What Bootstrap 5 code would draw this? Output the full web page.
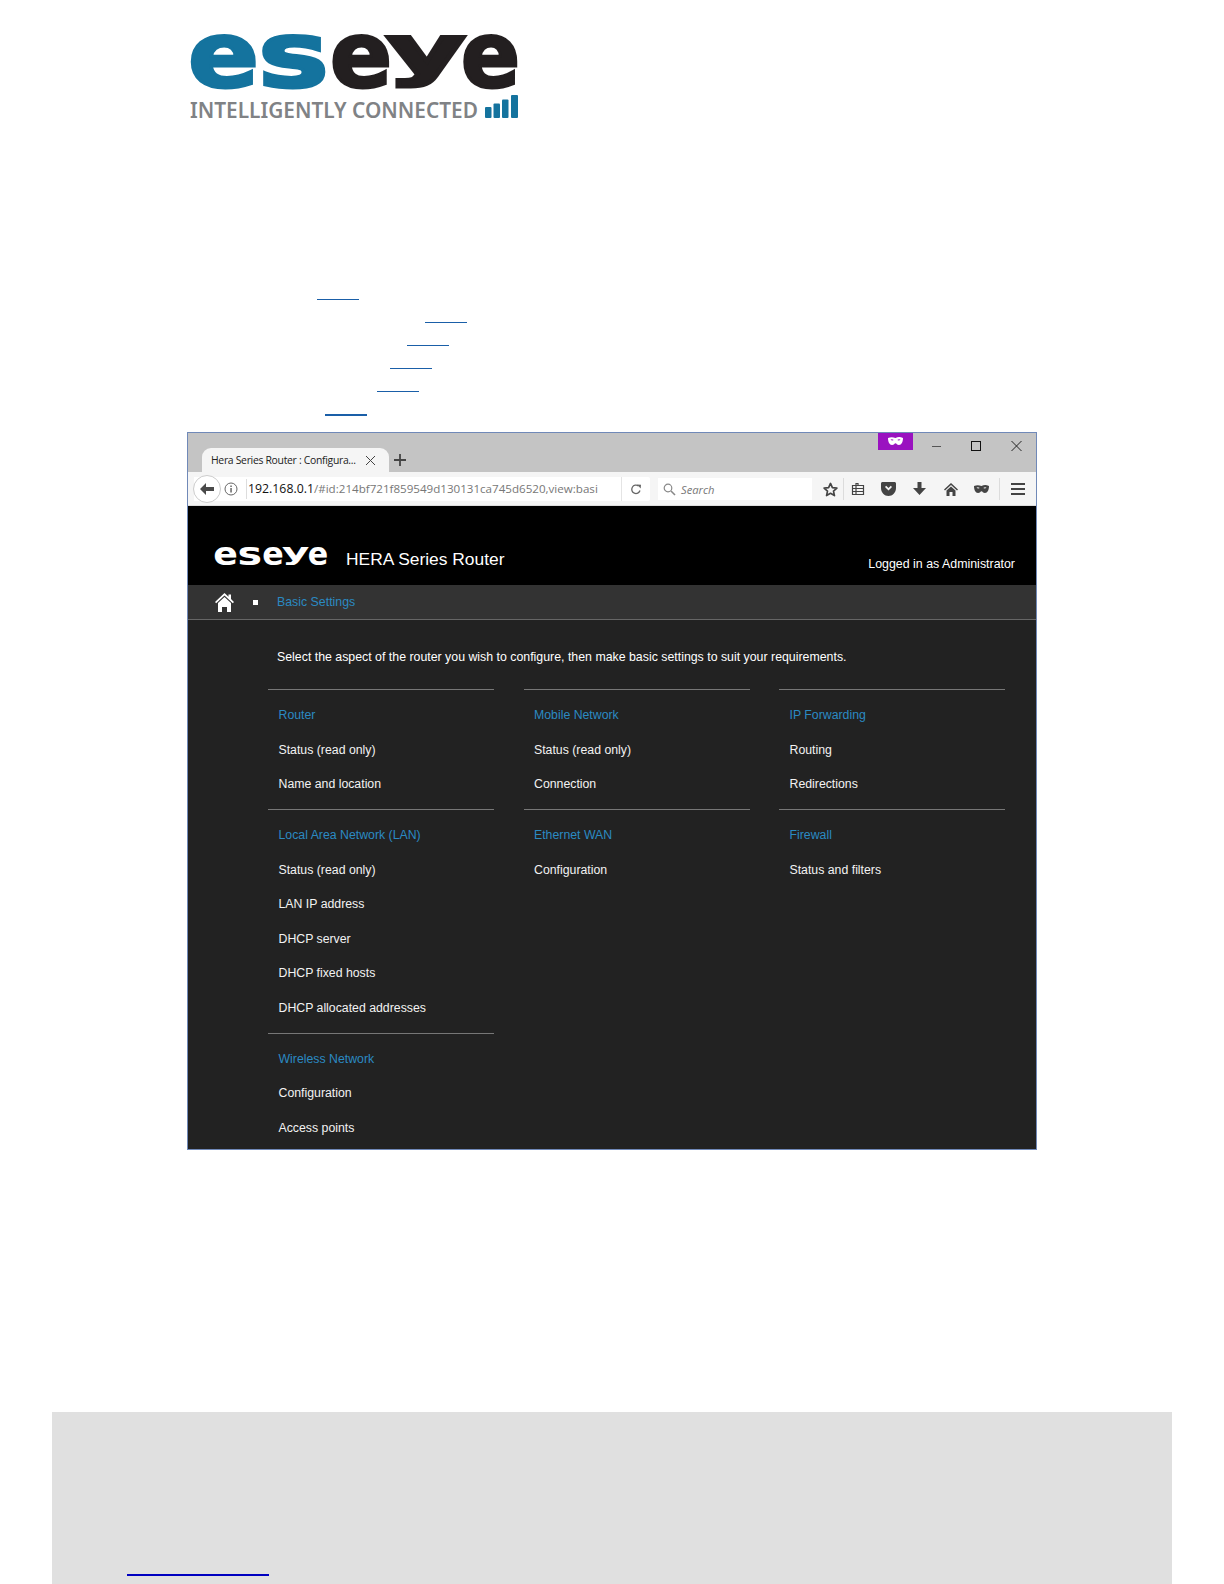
<!DOCTYPE html>
<html lang="en">
<head>
<meta charset="utf-8">
<title>Eseye HERA Series Router</title>
<link href="https://cdn.jsdelivr.net/npm/bootstrap@5.3.0/dist/css/bootstrap.min.css" rel="stylesheet">
<style>
html,body{height:1584px;overflow:hidden;background:#fff}
body{font-family:"Liberation Sans",Arial,sans-serif;position:relative}
.logo-wrap{height:132px;padding:20px 0 0 170px}
.logo-wrap svg{display:block}
.word{font-family:"DejaVu Sans",sans-serif;font-weight:700}
.tag{font-family:"Noto Sans",sans-serif;font-weight:600}
.toc{padding-top:167px;height:300px}
.toc-row{height:23px;position:relative}
.toc-rule{display:block;width:42px;height:1px;background:#1a5fa8}
.toc-row.r1{padding-left:317px}.toc-row.r2{padding-left:425px}.toc-row.r3{padding-left:407px}
.toc-row.r4{padding-left:390px}.toc-row.r5{padding-left:377px}.toc-row.r6{padding-left:325px}
.toc-row.r6 .toc-rule{height:2px}
.shot{margin-left:187px;width:850px;height:718px;border:1px solid #7089b8;overflow:hidden;background:#222;font-size:12.35px}
.tabbar{height:39px;background:#c4c4c4;position:relative}
.tab{width:187px;height:24px;margin:15px 0 0 14px;background:#f5f5f5;border-radius:9px 9px 0 0;font:10.4px "Open Sans",sans-serif;letter-spacing:-.3px;color:#222;padding-left:9px;gap:4px}
.tab-title{width:150px;white-space:nowrap}
.plus{margin:15px 0 0 0;width:22px;height:24px}
.priv{width:35px;height:17px;background:#9a12c0;margin-right:3px}
.winbtn{width:40px;height:24px}
.toolbar{height:34px;background:#f5f5f5;border-bottom:1px solid #ddd;padding-left:6px;padding-top:1px}
.urlbox{width:456px;height:24px;background:#fff;position:relative;padding-left:42px;white-space:nowrap;border-radius:0 2px 2px 0;font-family:"Open Sans",sans-serif}
.backbtn{position:absolute;left:-1px;top:-2px;width:28px;height:28px;border-radius:50%;background:#fff;border:1px solid #ccc}
.info{position:absolute;left:30px;top:5px}
.sep{position:absolute;left:52px;top:2px;width:1px;height:20px;background:#ddd}
.urlhost{color:#111;font-size:12.3px}
.urlrest{color:#777;font-size:11.6px}
.urlpath{margin-left:12px;width:365px;overflow:hidden}
.reload{position:absolute;right:0;top:0;width:29px;height:24px;border-left:1px solid #e4e4e4}
.searchbox{width:154px;height:22px;background:#fff;margin-left:8px;font:italic 11.2px "Open Sans",sans-serif;color:#777;padding-left:5px;gap:5px}
.tbicons{margin-left:5px}
.ti{width:31px;height:24px}
.ti.nar{width:26px}
.ti.clip{width:27px;margin-right:2px}
.tdiv{width:1px;height:22px;background:#dcdcdc}
.tdiv.wid{margin:0 2px}
.app-head{height:79px;background:#000;color:#fff;padding:0 21px 0 26px}
.app-title{font-size:17.4px;margin-left:16px;padding-top:40px}
.app-user{font-size:12.4px;padding-top:49px}
.app-nav{height:35px;background:#333;border-bottom:1px solid #666;color:#2b8ac2;padding-left:27px}
.crumb-dot{width:5px;height:5px;background:#fff;margin:0 19px}
.app-body{padding:0 31px 0 80px;color:#fff}
.intro{height:69px;padding:29px 0 0 9px;line-height:16px;white-space:nowrap}
.colgrid{display:grid;grid-template-columns:repeat(3,226px);column-gap:29.5px}
.sect{border-top:1px solid #777;padding:8px 0 7.7px 10.5px;font-size:12.3px}
.sect div{height:34.5px;line-height:34.5px;white-space:nowrap;color:#f2f2f2}
.sect div.sect-h{color:#2b8ac2}
.foot{position:absolute;left:52px;top:1412px;width:1120px;height:172px;background:#e0e0e0;padding:162px 0 0 75px}
.foot-rule{display:block;width:142px;height:2px;background:#0000c0}
</style>
</head>
<body>
<div class="logo-wrap">
<svg width="360" height="105" viewBox="170 20 360 105">
<g class="word" stroke-width="3" font-size="91">
<text x="188" y="87" fill="#14739e" stroke="#14739e" textLength="71" lengthAdjust="spacingAndGlyphs">e</text>
<text x="258" y="87" fill="#14739e" stroke="#14739e" textLength="71" lengthAdjust="spacingAndGlyphs">s</text>
<text x="330" y="87" fill="#231f20" stroke="#231f20" textLength="62" lengthAdjust="spacingAndGlyphs">e</text>
<text x="386" y="73" font-size="65" fill="#231f20" stroke="#231f20" textLength="80" lengthAdjust="spacingAndGlyphs">y</text>
<text x="461" y="87" fill="#231f20" stroke="#231f20" textLength="59" lengthAdjust="spacingAndGlyphs">e</text>
</g>
<text class="tag" x="190" y="118" font-size="21.5" fill="#808285" textLength="288" lengthAdjust="spacingAndGlyphs">INTELLIGENTLY CONNECTED</text>
<g fill="#14739e"><rect x="485" y="107" width="6.5" height="11" rx="1"/><rect x="493.500" y="103.500" width="6.500" height="14.500" rx="1"/><rect x="502" y="99.500" width="6.500" height="18.500" rx="1"/><rect x="511" y="95" width="7" height="23" rx="1"/></g>
</svg>
</div>
<div class="toc">
<div class="toc-row r1"><span class="toc-rule"></span></div>
<div class="toc-row r2"><span class="toc-rule"></span></div>
<div class="toc-row r3"><span class="toc-rule"></span></div>
<div class="toc-row r4"><span class="toc-rule"></span></div>
<div class="toc-row r5"><span class="toc-rule"></span></div>
<div class="toc-row r6"><span class="toc-rule"></span></div>
</div>
<div class="shot">
 <div class="tabbar d-flex align-items-start">
  <div class="tab d-flex align-items-center">
   <span class="tab-title">Hera Series Router : Configura...</span>
   <svg width="11" height="11" viewBox="0 0 11 11"><path d="M1 1l9 9M10 1l-9 9" stroke="#444" stroke-width="1" fill="none"/></svg>
  </div>
  <div class="plus d-flex align-items-center justify-content-center">
   <svg width="12" height="12" viewBox="0 0 12 12"><path d="M6 0v12M0 6h12" stroke="#444" stroke-width="1.8"/></svg>
  </div>
  <div class="ms-auto d-flex align-items-start">
   <div class="priv d-flex align-items-center justify-content-center">
    <svg width="15" height="9" viewBox="0 0 15 9"><path fill="#fff" fill-rule="evenodd" d="M0 1c3-1.300 5-1 7.500 0C10-.1 12-.3 15 1c0 4-1.500 7-4 7-2 0-2.500-1.800-3.500-1.800S6 8 4 8C1.500 8 0 5 0 1zm2.500 1.800c1 1 2.500 1 3.200.3-1-1-2.300-1.200-3.200-.3zm6.800.3c.7.7 2.200.7 3.200-.3-.9-.9-2.200-.7-3.200.3z"/></svg>
   </div>
   <div class="winbtn d-flex align-items-center justify-content-center"><svg width="11" height="11" viewBox="0 0 11 11"><path d="M1 6.500h9" stroke="#555" stroke-width="1"/></svg></div>
   <div class="winbtn d-flex align-items-center justify-content-center"><svg width="11" height="11" viewBox="0 0 11 11"><rect x=".5" y="1.500" width="9" height="9" fill="none" stroke="#111" stroke-width="1"/></svg></div>
   <div class="winbtn d-flex align-items-center justify-content-center"><svg width="11" height="11" viewBox="0 0 11 11"><path d="M.5 1l10 10M10.500 1l-10 10" stroke="#222" stroke-width="1"/></svg></div>
  </div>
 </div>
 <div class="toolbar d-flex align-items-center">
  <div class="urlbox d-flex align-items-center">
   <div class="backbtn d-flex align-items-center justify-content-center">
    <svg width="14" height="12" viewBox="0 0 14 12"><path d="M6 0L0 6l6 6V8h8V4H6z" fill="#4a4a4a"/></svg>
   </div>
   <svg class="info" width="14" height="14" viewBox="0 0 14 14"><circle cx="7" cy="7" r="6" fill="none" stroke="#666" stroke-width="1"/><rect x="6.300" y="6" width="1.500" height="4.500" fill="#666"/><rect x="6.300" y="3.500" width="1.500" height="1.500" fill="#666"/></svg>
   <span class="sep"></span>
   <div class="urlpath"><span class="urlhost">192.168.0.1</span><span class="urlrest">/#id:214bf721f859549d130131ca745d6520,view:basi</span></div>
   <div class="reload d-flex align-items-center justify-content-center">
    <svg width="12" height="12" viewBox="0 0 12 12"><path d="M10 7.500A4.200 4.200 0 1 1 8.500 3" fill="none" stroke="#666" stroke-width="1.300"/><path d="M7 1.500l4 .2-.3 3.800z" fill="#666"/></svg>
   </div>
  </div>
  <div class="searchbox d-flex align-items-center">
   <svg width="13" height="13" viewBox="0 0 13 13"><circle cx="5" cy="5" r="3.800" fill="none" stroke="#888" stroke-width="1.200"/><path d="M8 8l4 4" stroke="#888" stroke-width="1.600"/></svg>
   <span>Search</span>
  </div>
  <div class="tbicons d-flex align-items-center">
   <div class="ti nar d-flex align-items-center justify-content-center">
    <svg width="15" height="15" viewBox="0 0 16 16"><path d="M8 1.500l2 4.500 4.800.5-3.600 3.200 1 4.800L8 12.100l-4.200 2.400 1-4.800L1.200 6.500 6 6z" fill="none" stroke="#444" stroke-width="1.800" stroke-linejoin="round"/></svg>
   </div>
   <span class="tdiv"></span>
   <div class="ti clip d-flex align-items-center justify-content-center">
    <svg width="14" height="14" viewBox="0 0 14 14"><path d="M1.500 3.500h11v9h-11zM5 3.500V1.500h2v2M1.500 6.500h11M1.500 9.500h11M5 3.500v9" fill="none" stroke="#444" stroke-width="1.200"/></svg>
   </div>
   <div class="ti d-flex align-items-center justify-content-center">
    <svg width="15" height="14" viewBox="0 0 15 14"><path fill="#444" fill-rule="evenodd" d="M1.500 0h12c.8 0 1.500.7 1.500 1.500V6c0 4.500-3.500 8-7.500 8S0 10.500 0 6V1.500C0 .7.700 0 1.500 0zM4 5l3.500 3.500L11 5l-1.200-1.200-2.300 2.300-2.300-2.300z"/></svg>
   </div>
   <div class="ti d-flex align-items-center justify-content-center">
    <svg width="13" height="14" viewBox="0 0 13 14"><path d="M4.500 0h4v6H13l-6.500 7L0 6h4.500z" fill="#444"/></svg>
   </div>
   <div class="ti d-flex align-items-center justify-content-center">
    <svg width="14" height="13" viewBox="0 0 14 13"><path d="M7 0l7 6.500-1 1L7 2 1 7.500l-1-1zM2.500 7.500L7 3.500l4.500 4V13H8.500V9h-3v4h-3z" fill="#444"/></svg>
   </div>
   <div class="ti d-flex align-items-center justify-content-center">
    <svg width="15" height="9" viewBox="0 0 15 9"><path fill="#444" fill-rule="evenodd" d="M0 1c3-1.300 5-1 7.500 0C10-.1 12-.3 15 1c0 4-1.500 7-4 7-2 0-2.500-1.800-3.500-1.800S6 8 4 8C1.500 8 0 5 0 1zm2.500 1.800c1 1 2.500 1 3.200.3-1-1-2.300-1.200-3.200-.3zm6.800.3c.7.7 2.200.7 3.200-.3-.9-.9-2.200-.7-3.200.3z"/></svg>
   </div>
   <span class="tdiv wid"></span>
   <div class="ti d-flex align-items-center justify-content-center">
    <svg width="14" height="12" viewBox="0 0 14 12"><path d="M0 1h14M0 6h14M0 11h14" stroke="#444" stroke-width="2.200"/></svg>
   </div>
  </div>
 </div>
 <div class="app-head d-flex justify-content-between align-items-start">
  <div class="d-flex align-items-start">
   <svg width="116" height="62" viewBox="0 0 116 62">
    <g class="word" fill="#fff" transform="translate(-66 29) scale(.3465)" font-size="91">
     <text x="188" y="87" textLength="71" lengthAdjust="spacingAndGlyphs">e</text>
     <text x="258" y="87" textLength="71" lengthAdjust="spacingAndGlyphs">s</text>
     <text x="330" y="87" textLength="62" lengthAdjust="spacingAndGlyphs">e</text>
     <text x="386" y="73" font-size="65" textLength="80" lengthAdjust="spacingAndGlyphs">y</text>
     <text x="461" y="87" textLength="59" lengthAdjust="spacingAndGlyphs">e</text>
    </g>
   </svg>
   <div class="app-title">HERA Series Router</div>
  </div>
  <div class="app-user">Logged in as Administrator</div>
 </div>
 <div class="app-nav d-flex align-items-center">
  <svg width="19" height="20" viewBox="0 0 19 20"><path d="M9.500 1l4 3.700V2.500H16V7l3 3-1.200 1.300L9.500 3.500 1.200 11.300 0 10zM3 11l6.500-6 6.500 6v9h-4v-5H7v5H3z" fill="#fff"/></svg>
  <span class="crumb-dot"></span>
  <span>Basic Settings</span>
 </div>
 <div class="app-body">
  <div class="intro">Select the aspect of the router you wish to configure, then make basic settings to suit your requirements.</div>
  <div class="colgrid">
   <div>
    <div class="sect"><div class="sect-h">Router</div><div>Status (read only)</div><div>Name and location</div></div>
    <div class="sect"><div class="sect-h">Local Area Network (LAN)</div><div>Status (read only)</div><div>LAN IP address</div><div>DHCP server</div><div>DHCP fixed hosts</div><div>DHCP allocated addresses</div></div>
    <div class="sect"><div class="sect-h">Wireless Network</div><div>Configuration</div><div>Access points</div></div>
   </div>
   <div>
    <div class="sect"><div class="sect-h">Mobile Network</div><div>Status (read only)</div><div>Connection</div></div>
    <div class="sect"><div class="sect-h">Ethernet WAN</div><div>Configuration</div></div>
   </div>
   <div>
    <div class="sect"><div class="sect-h">IP Forwarding</div><div>Routing</div><div>Redirections</div></div>
    <div class="sect"><div class="sect-h">Firewall</div><div>Status and filters</div></div>
   </div>
  </div>
 </div>
</div>
<div class="foot"><span class="foot-rule"></span></div>
<script src="https://cdn.jsdelivr.net/npm/bootstrap@5.3.0/dist/js/bootstrap.bundle.min.js"></script>
</body>
</html>
